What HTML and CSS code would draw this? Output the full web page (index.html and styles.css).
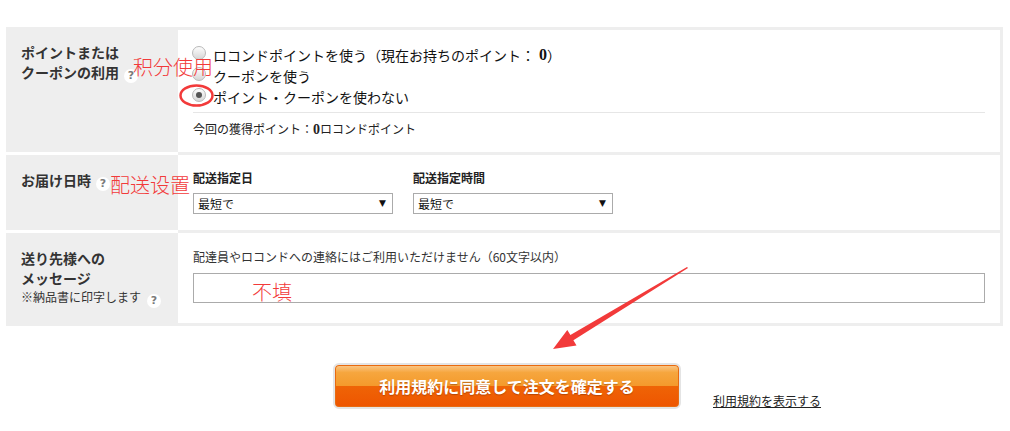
FILE: index.html
```html
<!DOCTYPE html>
<html lang="ja">
<head>
  <meta charset="UTF-8">
  <title>ご注文内容の確認</title>
  <link rel="stylesheet" href="styles.css">
</head>
<body>
  <div class="page">
    <div class="form-table">
      <div class="row">
        <div class="row-head">ポイントまたは<br>クーポンの利用<span class="help">?</span></div>
        <div class="row-body">
          <label class="radio"><span class="radio-mark"></span>ロコンドポイントを使う（現在お持ちのポイント： <b>0</b>）</label>
          <label class="radio"><span class="radio-mark"></span>クーポンを使う</label>
          <label class="radio"><span class="radio-mark checked"></span>ポイント・クーポンを使わない</label>
          <div class="earned">今回の獲得ポイント：<b>0</b>ロコンドポイント</div>
        </div>
      </div>
      <div class="row">
        <div class="row-head">お届け日時<span class="help">?</span></div>
        <div class="row-body">
          <div class="delivery">
            <div class="field">
              <div class="field-label">配送指定日</div>
              <div class="select">最短で</div>
            </div>
            <div class="field">
              <div class="field-label">配送指定時間</div>
              <div class="select">最短で</div>
            </div>
          </div>
        </div>
      </div>
      <div class="row">
        <div class="row-head">送り先様への<br>メッセージ<div class="head-note">※納品書に印字します<span class="help">?</span></div></div>
        <div class="row-body">
          <div class="note">配達員やロコンドへの連絡にはご利用いただけません（60文字以内）</div>
          <div class="message-box"></div>
        </div>
      </div>
    </div>

    <div class="submit-row">
      <div></div>
      <button class="submit-btn" type="button">利用規約に同意して注文を確定する</button>
      <a class="terms-link" href="#">利用規約を表示する</a>
    </div>

    <!-- annotations drawn over the screenshot -->
    <svg class="marks" width="1010" height="431" viewBox="0 0 1010 431">
      <ellipse cx="196.5" cy="95.5" rx="16" ry="10" fill="none" stroke="#f23a3a" stroke-width="2.5"/>
      <polygon fill="#f23a3a" points="688,268 573.4,340.3 576.5,345.4 553,349 567.3,330 570.4,335.1 687,267"/>
    </svg>
    <div class="memo memo-point">积分使用</div>
    <div class="memo memo-ship">配送设置</div>
    <div class="memo memo-skip">不填</div>
  </div>
</body>
</html>
```

FILE: styles.css
```css
body {
  margin: 0;
  background-color: #fff;
  font-family: "Noto Sans CJK JP", "Noto Sans", sans-serif;
  color: #222;
}
.page {
  position: relative;
  width: 1010px;
  height: 431px;
  padding: 27px 7px 0 6px;
  box-sizing: border-box;
}
.form-table {
  width: 997px;
}
.row {
  display: flex;
}
.row-head {
  width: 172px;
  box-sizing: border-box;
  flex: none;
  padding: 15px;
  background-color: #eee;
  border-bottom: 3px solid #fff;
  font-size: 14px;
  line-height: 20px;
  font-weight: bold;
  color: #333;
}
.row:last-child .row-head {
  border-bottom-color: #eee;
}
.row-body {
  flex: 1;
  padding: 14px 15px 13px;
  background-color: #fff;
  border-right: 3px solid #eee;
  border-bottom: 3px solid #eee;
}
.row:first-child .row-body {
  border-top: 3px solid #eee;
}
.help {
  display: inline-block;
  width: 14px;
  height: 14px;
  margin-left: 5px;
  border-radius: 50%;
  background-color: #fff;
  color: #7a7a7a;
  font-size: 11px;
  line-height: 14px;
  font-weight: bold;
  text-align: center;
  vertical-align: -1px;
  font-family: "DejaVu Sans", sans-serif;
}
.head-note {
  font-size: 12px;
  line-height: 18px;
  font-weight: normal;
}
.head-note .help {
  margin-left: 6px;
  vertical-align: -2px;
}

/* points / coupon */
.radio {
  display: flex;
  align-items: center;
  height: 21px;
  font-size: 14px;
  color: #111;
}
.radio b {
  font-family: "Liberation Serif", serif;
  font-size: 16px;
  margin-left: 4px;
}
.radio-mark {
  position: relative;
  width: 12px;
  height: 12px;
  margin: -4px 7px 0 -1px;
  border: 1px solid #b9b9b9;
  border-radius: 50%;
  background: linear-gradient(#fdfdfd, #d6d6d6);
}
.radio-mark.checked::after {
  content: "";
  position: absolute;
  left: 3px;
  top: 3px;
  width: 6px;
  height: 6px;
  border-radius: 50%;
  background-color: #555;
}
.earned {
  margin-top: 5px;
  padding-top: 7px;
  border-top: 1px solid #e6e6e6;
  font-size: 12px;
  line-height: 18px;
  color: #222;
}
.earned b {
  font-family: "Liberation Serif", serif;
  font-size: 14px;
}

/* delivery */
.delivery {
  display: flex;
  gap: 20px;
  padding-bottom: 3px;
}
.field-label {
  font-size: 12px;
  line-height: 18px;
  font-weight: bold;
  margin-bottom: 6px;
}
.select {
  position: relative;
  width: 200px;
  height: 21px;
  box-sizing: border-box;
  padding-left: 4px;
  border: 1px solid #ababab;
  font-size: 12px;
  line-height: 19px;
  color: #111;
}
.select::after {
  content: "▼";
  position: absolute;
  right: 6px;
  top: 0;
  font-size: 9px;
  color: #111;
  font-family: "DejaVu Sans", sans-serif;
}

/* message */
.note {
  font-size: 12px;
  line-height: 18px;
  color: #333;
  margin-top: 1px;
}
.message-box {
  height: 30px;
  box-sizing: border-box;
  margin-top: 7px;
  margin-bottom: 5px;
  border: 1px solid #ababab;
}

/* submit */
.submit-row {
  display: grid;
  grid-template-columns: 1fr auto 1fr;
  width: 997px;
  margin-top: 37px;
  padding-left: 5px;
  box-sizing: border-box;
}
.submit-btn {
  width: 348px;
  height: 46px;
  padding: 0;
  border: 2px solid #e4e4e4;
  border-radius: 6px;
  background: linear-gradient(#fbc88c 0%, #f6a63e 18%, #f49a2c 49%, #ef6406 50%, #ee5500 100%);
  box-shadow: inset 0 0 0 1px #e86a10;
  color: #fff;
  font-family: "Noto Sans CJK JP", sans-serif;
  font-size: 16px;
  font-weight: bold;
  text-shadow: 0 1px 1px rgba(120, 40, 0, 0.45);
}
.terms-link {
  align-self: end;
  justify-self: start;
  margin-left: 32px;
  margin-bottom: -1px;
  font-size: 12px;
  line-height: 18px;
  color: #222;
}

/* red notes over the page */
.marks {
  position: absolute;
  left: 0;
  top: 0;
  pointer-events: none;
}
.memo {
  position: absolute;
  font-family: "Noto Sans CJK SC", sans-serif;
  font-size: 20px;
  line-height: 22px;
  font-weight: 300;
  color: #f23a3a;
}
.memo-point {
  left: 133px;
  top: 56px;
}
.memo-ship {
  left: 110px;
  top: 174px;
}
.memo-skip {
  left: 252px;
  top: 281px;
}
```
